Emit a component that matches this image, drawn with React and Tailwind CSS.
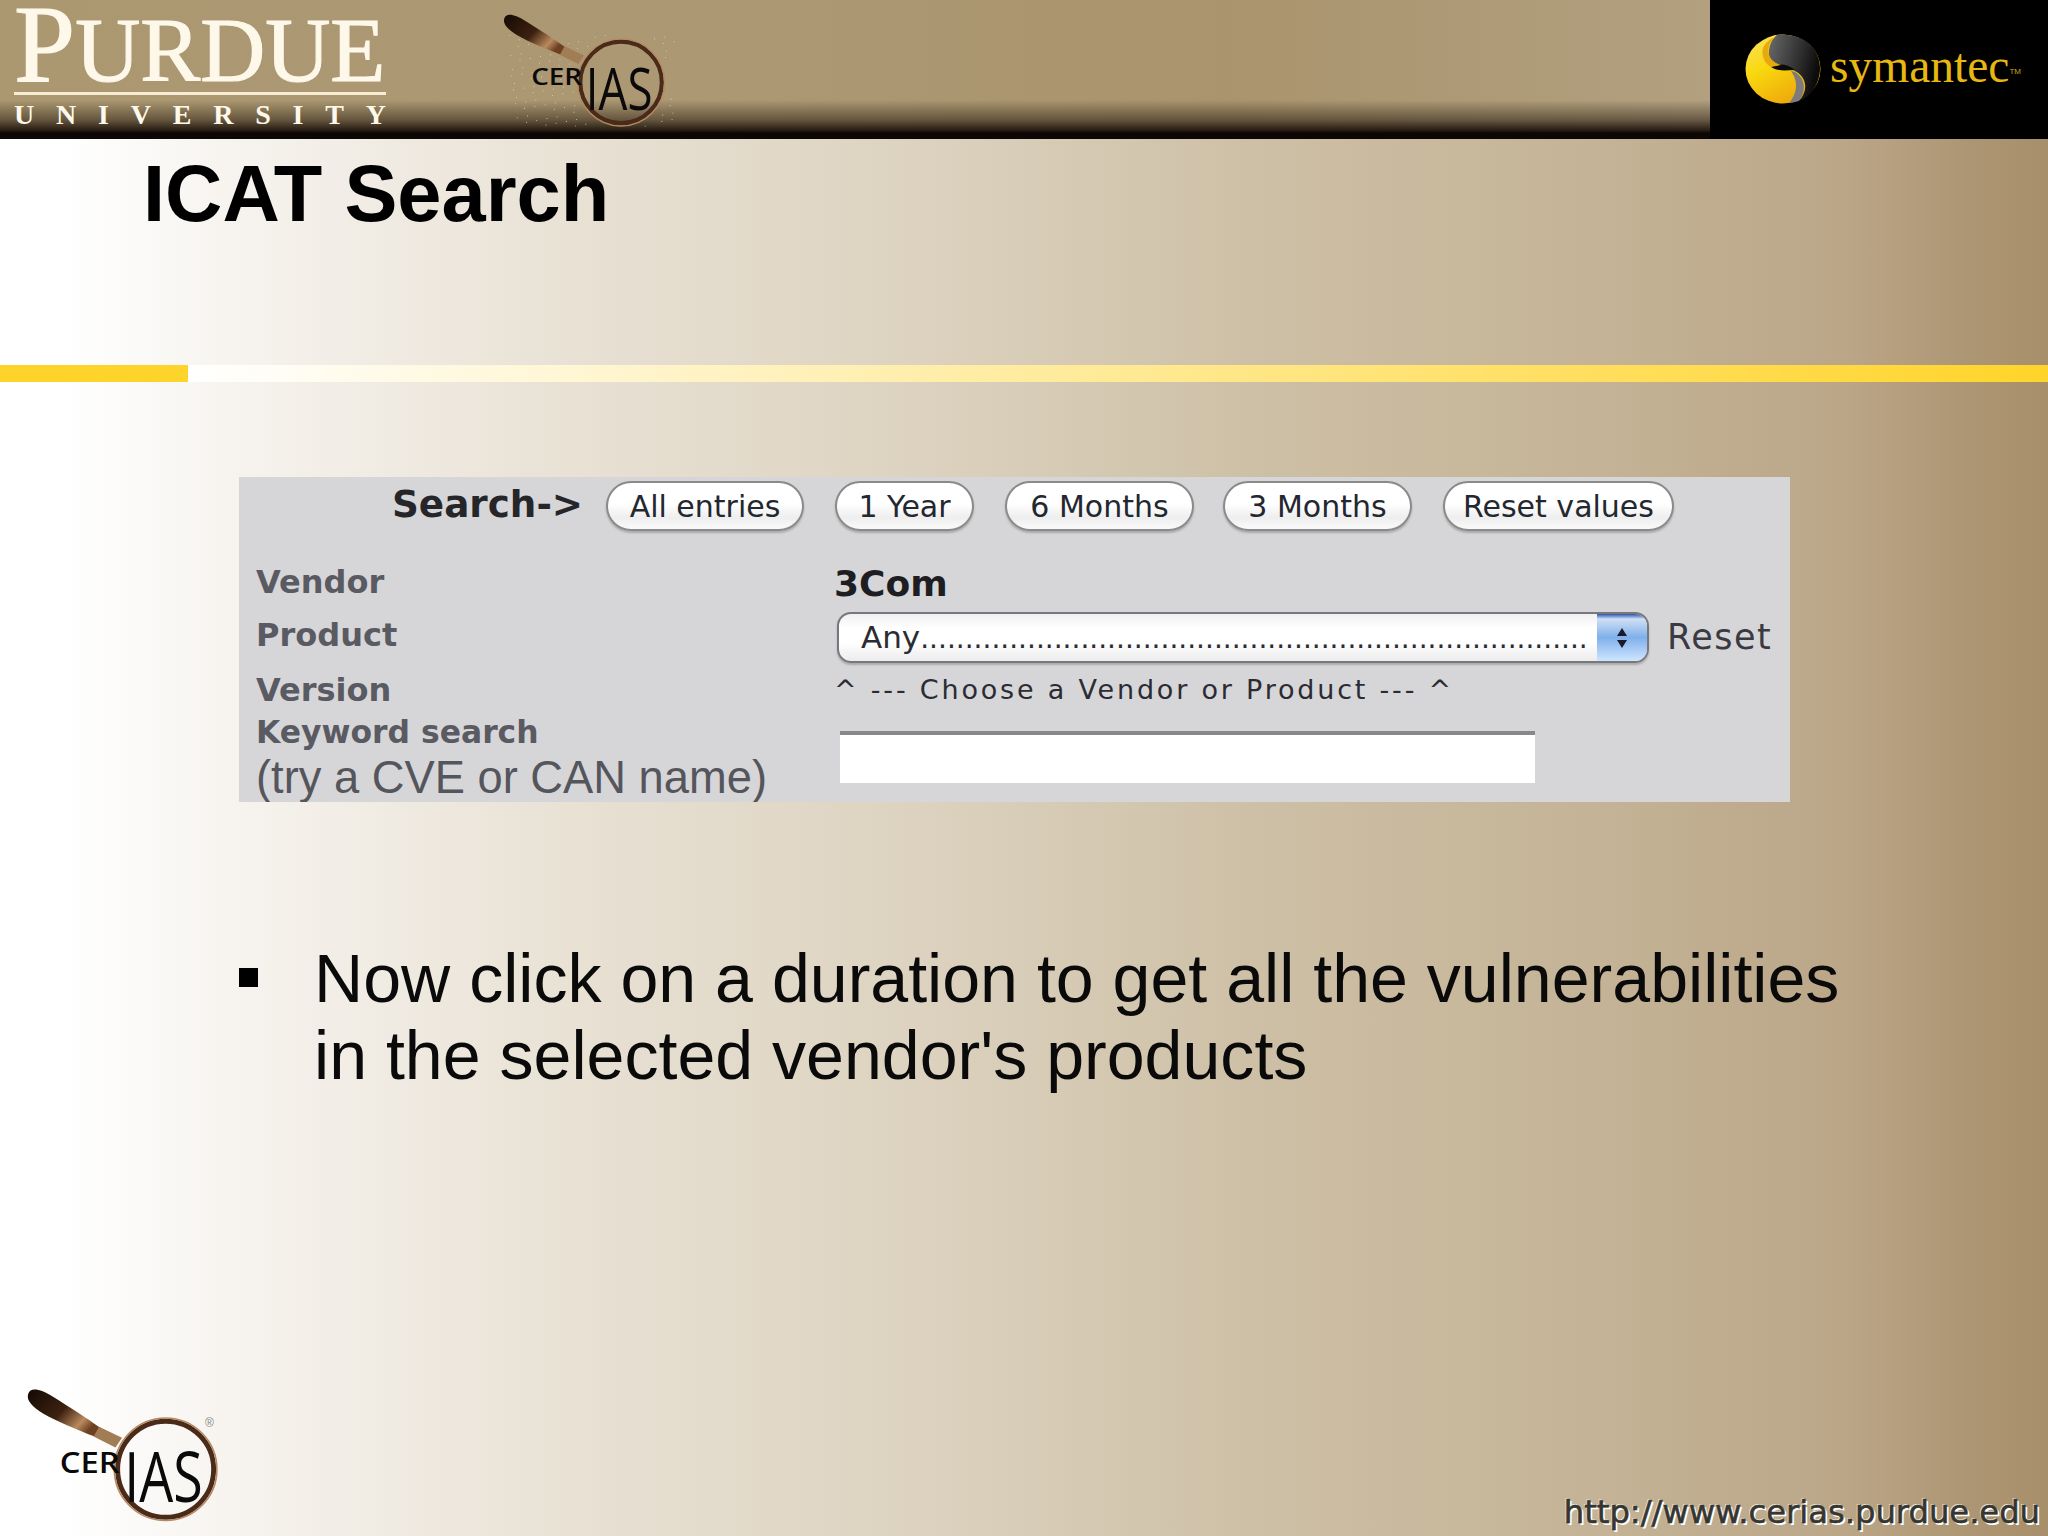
import React from "react";

function Cerias({ w, h, reg, dots, id }) {
  const ds = [];
  if (dots) {
    for (let i = 0; i < 170; i++) {
      const x = 30 + ((i * 37) % 178);
      const y = 38 + ((i * 53) % 99);
      const dx = x - 150, dy = y - 89;
      if (dx * dx + dy * dy > 2800) ds.push(<circle key={i} cx={x} cy={y} r="0.6" fill="#e9dfc8" opacity="0.75" />);
    }
  }
  return (
    <svg width={w} height={h} viewBox="0 0 220 150" className="block">
      <defs>
        <linearGradient id={id} x1="0" y1="0" x2="1" y2="0.6">
          <stop offset="0" stop-color="#140a05" />
          <stop offset="0.55" stop-color="#3d2110" />
          <stop offset="0.85" stop-color="#b98a5e" />
          <stop offset="1" stop-color="#6d4022" />
        </linearGradient>
      </defs>
      {ds}
      <path d="M24 20 C 26 13, 36 16, 46 22 C 62 32, 78 42, 90 51 L 85 59 C 70 53, 52 46, 38 38 C 28 32, 22 26, 24 20 Z" fill={`url(#${id})`} />
      <path d="M89 50 L 110 60 L 104 69 L 84 59 Z" fill="#a17c55" />
      <circle cx="150" cy="89" r="44" fill="none" stroke="#4a2a18" strokeWidth="4.5" />
      <circle cx="150" cy="89" r="47" fill="none" stroke="#b58a63" strokeWidth="1.5" />
      <text x="53" y="92" fontFamily="'Open Sans', sans-serif" fontSize="26" fontWeight="600" fill="#0a0a0a" textLength="55" lengthAdjust="spacingAndGlyphs">CER</text>
      <text x="112" y="119" fontFamily="'Open Sans', sans-serif" fontSize="64" fontWeight="500" fill="#0a0a0a" textLength="72" lengthAdjust="spacingAndGlyphs">IAS</text>
      {reg && <text x="186" y="50" fontFamily="'Liberation Sans', sans-serif" fontSize="11" fill="#888">®</text>}
    </svg>
  );
}

function SymantecMark() {
  return (
    <svg width="76" height="70" viewBox="0 0 76 70" className="block">
      <defs>
        <linearGradient id="syY" x1="0" y1="0" x2="0.6" y2="1">
          <stop offset="0" stop-color="#f7e26a" />
          <stop offset="0.45" stop-color="#f9d90f" />
          <stop offset="1" stop-color="#eea70a" />
        </linearGradient>
        <linearGradient id="syG" x1="0" y1="0" x2="1" y2="0.3">
          <stop offset="0" stop-color="#6a6a6a" />
          <stop offset="0.7" stop-color="#2a2a2a" />
          <stop offset="1" stop-color="#0c0c0c" />
        </linearGradient>
      </defs>
      <ellipse cx="38" cy="35" rx="37.5" ry="34.5" fill="url(#syY)" />
      <path d="M32 1 C 62 -2 76 18 75 36 C 74 52 64 64 54 67 C 64 56 62 42 48 36 C 34 31 22 28 24 16 C 25 9 28 4 32 1 Z" fill="url(#syG)" />
      <path d="M26 33 C 34 29 42 30 50 36 C 42 36 34 38 26 33 Z" fill="#0a0a0a" />
      <path d="M30 3 C 25 8 22 14 24 21 C 26 27 30 29 36 31 L 26 33 C 20 30 16 22 18 14 C 20 9 25 5 30 3 Z" fill="#e7a90c" />
      <path d="M50 38 C 60 44 62 56 54 67 C 50 68 46 69 44 69 C 52 60 54 48 46 37 Z" fill="#7c7c7c" />
    </svg>
  );
}

function Btn({ w, ml, children }) {
  return (
    <div className={`${w} ${ml} h-[50px] rounded-full border-2 border-[#8a8a8a] bg-[linear-gradient(#ffffff_0%,#ffffff_45%,#eeeeee_75%,#fafafa_100%)] shadow-[0_2px_2px_#aaaaaa] flex items-center justify-center text-[30px] text-[#23272f] font-['DejaVu_Sans',sans-serif]`}>
      {children}
    </div>
  );
}

export default function App() {
  return (
    <div className="relative w-[2048px] h-[1536px] overflow-hidden flex flex-col bg-[linear-gradient(to_right,#ffffff_0%,#ffffff_3%,#f4f0ea_14%,#e8e1d4_28%,#dcd2bf_45%,#cdbfa5_62%,#c4b396_78%,#bba688_90%,#ad9673_96%,#a88f6c_100%)] font-['Liberation_Sans',sans-serif]">
      {/* Header */}
      <div className="h-[139px] shrink-0 flex bg-[linear-gradient(to_bottom,rgba(0,0,0,0)_0px,rgba(0,0,0,0)_100px,rgba(30,20,10,0.5)_120px,rgba(20,10,5,0.9)_131px,#0c0604_133px,#0c0604_139px),linear-gradient(to_right,#ab9770,#ac9873_35%,#a9946d_60%,#b9a88c_100%)]">
        <div className="ml-[14px] w-[372px] flex flex-col text-[#fdf8ea] font-['Liberation_Serif',serif]">
          <div className="h-[88px] flex items-baseline leading-none pt-[2px] [-webkit-text-stroke:1.2px_#fdf8ea]">
            <span className="text-[110px] leading-[84px]">P</span>
            <span className="text-[90px] leading-[84px]">URDUE</span>
          </div>
          <div className="h-[3px] mt-[4px] bg-[#f7edd5]"></div>
          <div className="mt-[4px] flex justify-between text-[28px] leading-[32px] font-bold">
            {"UNIVERSITY".split("").map((c, i) => <span key={i}>{c}</span>)}
          </div>
        </div>
        <div className="ml-[96px] mt-[0px]">
          <Cerias w={204} h={139} dots id="cerA" />
        </div>
        <div className="flex-1"></div>
        <div className="w-[338px] h-full bg-black flex items-start pl-[35px] pt-[34px]">
          <SymantecMark />
          <span className="ml-[9px] mt-[5px] text-[47.5px] leading-[54px] text-[#e6b811] font-['Liberation_Serif',serif]">symantec</span>
          <span className="mt-[33px] text-[8px] leading-[10px] text-[#c9a417] font-['Liberation_Sans',sans-serif]">TM</span>
        </div>
      </div>

      {/* Title */}
      <div className="h-[226px] shrink-0 pl-[143px] pt-[10px]">
        <h1 className="text-[79.4px] leading-[90px] font-bold text-black">ICAT Search</h1>
      </div>

      {/* Rule */}
      <div className="h-[17px] shrink-0 flex">
        <div className="w-[188px] bg-[#ffd42a]"></div>
        <div className="flex-1 bg-[linear-gradient(to_right,#ffffff,#ffd42a)]"></div>
      </div>

      {/* Search panel */}
      <div className="mt-[95px] ml-[239px] w-[1551px] h-[325px] shrink-0 bg-[#d6d6d8] flex flex-col overflow-hidden font-['DejaVu_Sans',sans-serif]">
        <div className="mt-[4px] h-[50px] flex items-center pl-[153px]">
          <div className="w-[214px] text-[37.3px] leading-[40px] font-bold text-[#26262a] -mt-[4px]">Search-&gt;</div>
          <Btn w="w-[198px]" ml="ml-0">All entries</Btn>
          <Btn w="w-[139px]" ml="ml-[31px]">1 Year</Btn>
          <Btn w="w-[189px]" ml="ml-[31px]">6 Months</Btn>
          <Btn w="w-[189px]" ml="ml-[29px]">3 Months</Btn>
          <Btn w="w-[231px]" ml="ml-[31px]">Reset values</Btn>
        </div>
        <div className="mt-[27px] h-[52px] flex items-center">
          <div className="w-[595px] pl-[17px] text-[32px] font-bold text-[#5a5a62] -mt-[4px]">Vendor</div>
          <div className="text-[36px] font-bold text-[#1e1e22]">3Com</div>
        </div>
        <div className="mt-[2px] h-[51px] flex items-center">
          <div className="w-[598px] pl-[17px] text-[32px] font-bold text-[#5a5a62] -mt-[5px]">Product</div>
          <div className="relative w-[812px] h-[51px] rounded-[14px] border-2 border-[#77777c] bg-[linear-gradient(#f0f0f0,#ffffff_30%,#ffffff_60%,#ececec)] shadow-[0_2px_2px_#aaaaaa] overflow-hidden flex items-baseline pl-[22px] leading-[46px]">
            <span className="text-[31px] text-[#2b2b33]">Any</span>
            <span className="whitespace-nowrap text-[28px] text-[#2b2b33]">{".".repeat(75)}</span>
            <div className="absolute right-0 top-0 bottom-0 w-[50px] bg-[linear-gradient(#2a55a8_0px,#cfe0f5_5px,#7fb0ea_50%,#cfe6ff_100%)] flex flex-col items-center justify-center gap-[4px]">
              <div className="w-0 h-0 border-l-[5px] border-r-[5px] border-b-[8px] border-l-transparent border-r-transparent border-b-[#1a1a2a]"></div>
              <div className="w-0 h-0 border-l-[5px] border-r-[5px] border-t-[8px] border-l-transparent border-r-transparent border-t-[#1a1a2a]"></div>
            </div>
          </div>
          <div className="ml-[18px] text-[35px] tracking-[1.5px] text-[#3a3a42]">Reset</div>
        </div>
        <div className="mt-[3px] h-[52px] flex items-center">
          <div className="w-[595px] pl-[17px] text-[32px] font-bold text-[#5a5a62]">Version</div>
          <div className="text-[27px] tracking-[2.8px] text-[#2b2b33] whitespace-nowrap">^ --- Choose a Vendor or Product --- ^</div>
        </div>
        <div className="flex">
          <div className="w-[601px] pl-[17px] flex flex-col">
            <div className="text-[31.4px] leading-[36px] font-bold text-[#5a5a62]">Keyword search</div>
            <div className="mt-[4px] text-[45.3px] leading-[48px] text-[#55555c] whitespace-nowrap font-['Liberation_Sans',sans-serif]">(try a CVE or CAN name)</div>
          </div>
          <div className="mt-[17px] w-[695px] h-[52px] bg-white border-t-[4px] border-t-[#88888c]"></div>
        </div>
      </div>

      {/* Bullet */}
      <div className="mt-[138px] ml-[239px] flex items-start">
        <div className="w-[19px] h-[19px] mt-[28px] bg-black shrink-0"></div>
        <p className="ml-[56px] w-[1600px] text-[68.1px] leading-[77px] text-[#0a0a0a]">
          Now click on a duration to get all the vulnerabilities<br />in the selected vendor's products
        </p>
      </div>

      {/* Footer */}
      <div className="mt-auto flex items-end justify-between h-[170px]">
        <div className="ml-[2px]">
          <Cerias w={240} h={164} reg id="cerB" />
        </div>
        <div className="mr-[8px] mb-[6px] text-[32.2px] leading-[36px] text-[#37352f] font-['DejaVu_Sans',sans-serif] [-webkit-text-stroke:0.6px_#37352f] [text-shadow:2px_2px_0_#ffffff,-1px_-1px_0_#e8e2d6]">http://www.cerias.purdue.edu</div>
      </div>
    </div>
  );
}
